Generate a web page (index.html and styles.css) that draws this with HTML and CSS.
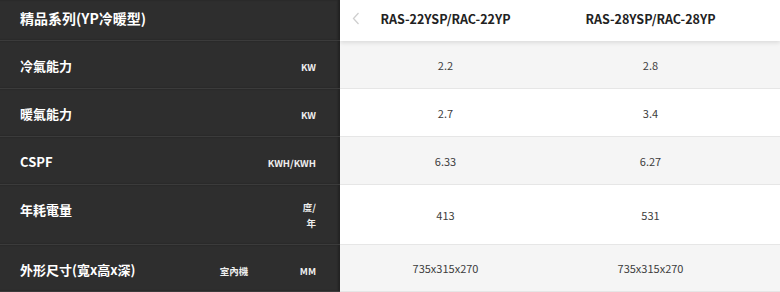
FILE: index.html
```html
<!DOCTYPE html>
<html lang="zh-Hant">
<head>
<meta charset="utf-8">
<link rel="stylesheet" href="styles.css">
</head>
<body>
<div class="table">
  <div class="row head">
    <div class="left"><span class="title">精品系列(YP冷暖型)</span></div>
    <div class="right">
      <span class="prev"><svg width="8" height="13" viewBox="0 0 8 13"><path d="M6.5 1 L1.5 6.5 L6.5 12" fill="none" stroke="#cfcfcf" stroke-width="1.3"/></svg></span>
      <div class="cell model">RAS-22YSP/RAC-22YP</div>
      <div class="cell model">RAS-28YSP/RAC-28YP</div>
    </div>
  </div>
  <div class="row grey">
    <div class="left"><span class="label">冷氣能力</span><span class="unit">KW</span></div>
    <div class="right"><div class="cell">2.2</div><div class="cell">2.8</div></div>
  </div>
  <div class="row">
    <div class="left"><span class="label">暖氣能力</span><span class="unit">KW</span></div>
    <div class="right"><div class="cell">2.7</div><div class="cell">3.4</div></div>
  </div>
  <div class="row grey">
    <div class="left"><span class="label">CSPF</span><span class="unit">KWH/KWH</span></div>
    <div class="right"><div class="cell">6.33</div><div class="cell">6.27</div></div>
  </div>
  <div class="row tall">
    <div class="left"><span class="label">年耗電量</span><span class="unit two">度/<br>年</span></div>
    <div class="right"><div class="cell">413</div><div class="cell">531</div></div>
  </div>
  <div class="row grey last">
    <div class="left"><span class="label">外形尺寸(寬x高x深)</span><span class="sub">室內機</span><span class="unit">MM</span></div>
    <div class="right"><div class="cell">735x315x270</div><div class="cell">735x315x270</div></div>
  </div>
</div>
</body>
</html>
```
FILE: styles.css
```css
* { box-sizing: border-box; }
html, body { margin: 0; padding: 0; }
body {
  width: 780px;
  height: 292px;
  overflow: hidden;
  background: #fff;
  font-family: "Noto Sans CJK TC", "Noto Sans", sans-serif;
}
.table { display: flex; flex-direction: column; }
.row { display: flex; height: 48px; }
.row.head { height: 41px; position: relative; z-index: 2; }
.row.tall { height: 60px; }
.row.last { height: 47px; }
.left {
  width: 340px;
  flex: none;
  background: #2e2e2e;
  border-bottom: 1px solid #3b3b3b;
  box-shadow: inset -2px 0 2px rgba(0,0,0,0.25);
  display: flex;
  align-items: flex-start;
  padding: 15px 24px 0 20px;
  color: #fff;
}
.head .left { padding-top: 7px; }
.title { font-size: 14px; font-weight: 700; line-height: 22px; }
.label { font-size: 13px; font-weight: 700; line-height: 20px; flex: 1; }
.sub { font-size: 9.5px; font-weight: 700; line-height: 16px; margin-top: 3px; width: 80px; color: #eee; }
.unit { font-size: 9.5px; font-weight: 700; line-height: 16px; margin-top: 3px; text-align: right; color: #eee; }
.unit.two { margin-top: -1px; }
.right {
  flex: 1;
  display: flex;
  align-items: center;
  padding-left: 3px;
  padding-right: 27px;
  border-bottom: 1px solid #e6e6e6;
  background: #fff;
  position: relative;
}
.row.grey .right { background: #f5f5f5; }
.head .right {
  border-bottom: none;
  box-shadow: 0 2px 4px rgba(0,0,0,0.10);
  background: #fff;
}
.cell {
  width: 205px;
  text-align: center;
  font-size: 11px;
  color: #3c3c3c;
  line-height: 18px;
}
.model { font-size: 12.5px; font-weight: 700; color: #222; padding-bottom: 4px; }
.prev { position: absolute; left: 12px; top: 12px; line-height: 0; }
```
